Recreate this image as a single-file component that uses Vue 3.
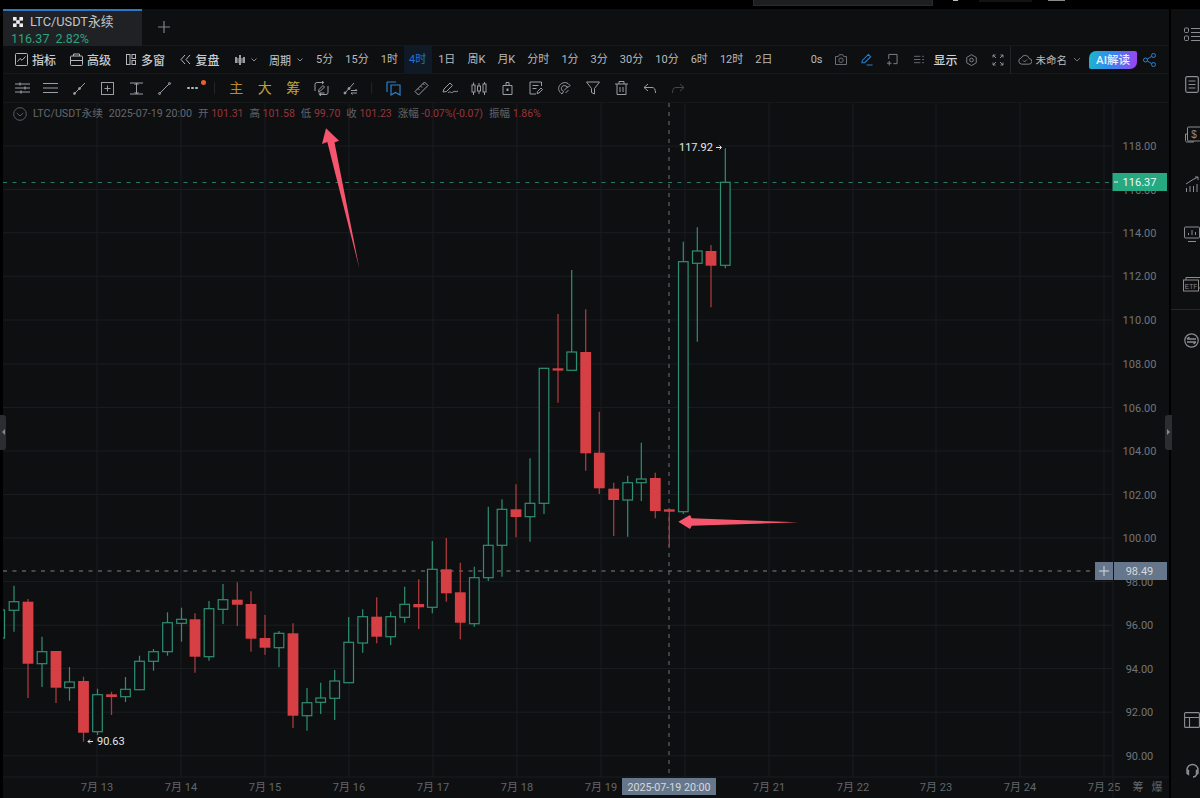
<script setup>
const periodsA = ['5分', '15分', '1时']
const periodsB = ['1日', '周K', '月K', '分时', '1分', '3分', '30分', '10分', '6时', '12时', '2日']
// [x, wickTop, wickBottom, bodyTop, bodyBottom, up]
const candles = [
  [14,585.7,631.7,601.7,610.3,1],[28,599,698,601.7,663.7,0],[42,636.7,687,651.7,663.7,1],[56,651,703,651,687.7,0],
  [69.5,667,700.7,682,687.7,1],[83.5,676.7,741.7,681,732.7,0],[97.5,688.7,735,694.7,731.7,1],[111.5,691.7,715,694.3,697,0],
  [125.5,677,702,689.3,696.7,1],[139.5,655.7,690,661.3,689.7,1],[153.5,649,670.7,651.7,661.3,1],[167.5,612.3,655.7,622.7,651.7,1],
  [181.5,607.7,641.7,619.3,623.3,1],[195,613.3,672.7,619.3,656.7,0],[209,601,660.7,608.7,656.7,1],[223,584,624,599.7,609.3,1],
  [237.3,582.3,626,599.7,604.7,0],[251,591.3,651.7,604,638.7,0],[265,615,654.7,638,647.7,0],[279,631,667.3,633.3,647.7,1],
  [293,623.3,728,633.3,715.7,0],[307,688,730.7,702.7,715.7,1],[320.7,682.7,714,698,702.3,1],[334.7,670,720,681,698.3,1],
  [348.7,617,682.7,642.3,682.7,1],[362.7,609.3,652.7,616.7,643,1],[376.7,597.3,643.3,616.7,636.7,0],[390.7,611.7,645,616.7,636.7,1],
  [404.7,586.7,622.7,604.3,617.3,1],[418.7,579.3,629,604,607.3,0],[432.3,541,613.3,569.3,607.3,1],[446.3,538,601.7,569.3,593.3,0],
  [460.3,562.7,639.3,592.3,622.7,0],[474.3,566.7,626.7,577.7,623.7,1],[488.3,506.7,581,545.3,577.7,1],[502,499.3,576.7,509.3,545.3,1],
  [516,484.3,537.3,509.3,517,0],[530,458.3,541.7,503.3,516.7,1],[544,368.3,514,368.3,503.3,1],[558,314,402.7,368.3,370.6,0],
  [571.7,270,370.3,352,370.3,1],[585.7,309.3,470.7,352,453.3,0],[599.3,411.7,494,452.7,488.3,0],[613.7,482.7,536,488.7,500,0],
  [627.7,475.7,536.7,482.7,500,1],[641.3,442.7,501,479,482.7,1],[655.3,472.7,518.3,478,511,0],[669.3,509,546.7,509.3,511.7,0],
  [683.3,241.7,514,261.7,511.7,1],[697.3,227.3,341.7,251,263.3,1],[711,245,307.3,251,265.7,0],[725.3,148.3,268.3,182.3,265.3,1]
]
const up = candles.filter(c => c[5]).map(c => ({ x: c[0], t: c[1], b: c[2], top: c[3], h: c[4] - c[3] }))
const down = candles.filter(c => !c[5]).map(c => ({ x: c[0], t: c[1], b: c[2], top: c[3], h: c[4] - c[3] }))
const prices = [[118,146],[116,189.5],[114,232.7],[112,276.3],[110,320],[108,364],[106,407.6],[104,451],[102,494.6],[100,538],[98,581.6],[96,625.2],[94,668.6],[92,712.2],[90,755.8]]
const dates = [[97,'7月 13'],[181,'7月 14'],[265,'7月 15'],[349,'7月 16'],[433,'7月 17'],[517,'7月 18'],[601,'7月 19'],[769,'7月 21'],[853,'7月 22'],[936,'7月 23'],[1020,'7月 24'],[1104,'7月 25']]
const vlines = [97,181,265,349,433,517,601,685,769,853,936,1020,1104]
</script>

<template>
  <div class="page">
    <div class="topstrip">
      <span class="ts a"></span><span class="ts b"></span><span class="ts c"></span><span class="ts d"></span>
    </div>
    <div class="body">
      <div class="main">
        <div class="tabs">
          <div class="tab">
            <div class="tabhead">
              <svg width="14" height="14" viewBox="0 0 14 14"><rect x="2" y="2" width="3.6" height="3.6" fill="#eee"/><rect x="8.4" y="2" width="3.6" height="3.6" fill="#eee"/><rect x="5.2" y="5.2" width="3.6" height="3.6" fill="#eee"/><rect x="2" y="8.4" width="3.6" height="3.6" fill="#eee"/><rect x="8.4" y="8.4" width="3.6" height="3.6" fill="#eee"/></svg>
              <span>LTC/USDT永续</span>
            </div>
            <div class="tabprice"><span>116.37</span><span>2.82%</span></div>
          </div>
          <svg class="plus" width="14" height="14" viewBox="0 0 14 14"><path d="M7 1v12M1 7h12" stroke="#7d8187" stroke-width="1.2"/></svg>
        </div>

        <div class="bar1">
          <div class="b1left">
            <span class="tool t1">
              <svg width="13" height="13" viewBox="0 0 13 13" fill="none" stroke="#b4b7bb" stroke-width="1"><rect x=".5" y=".5" width="12" height="12" rx="1"/><path d="M2.500 8.500l2.500-3 2 1.800L10.500 3.500"/></svg>指标
            </span>
            <span class="tool t2">
              <svg width="13" height="13" viewBox="0 0 13 13" fill="none" stroke="#b4b7bb" stroke-width="1"><rect x=".5" y="3" width="12" height="9.500" rx="1"/><path d="M.5 7.500h12M3.500 3V1h6v2"/></svg>高级
            </span>
            <span class="tool t3">
              <svg width="10" height="11" viewBox="0 0 10 11" fill="none" stroke="#b4b7bb" stroke-width="1"><rect x=".5" y=".5" width="3.500" height="10"/><rect x="6" y=".5" width="3.500" height="4"/><rect x="6" y="6.500" width="3.500" height="4"/></svg>多窗
            </span>
            <span class="tool t4">
              <svg width="11" height="11" viewBox="0 0 11 11" fill="none" stroke="#b4b7bb" stroke-width="1"><path d="M5 1L1 5.500 5 10M10 1L6 5.500 10 10"/></svg>复盘
            </span>
            <span class="tool t5">
              <svg width="12" height="13" viewBox="0 0 12 13" fill="#9a9da2"><path d="M1 4h2v6H1zM5 2h2v10H5zM9 4h2v6H9zM3.400 5h1.200v5H3.400zM7.400 5h1.200v5H7.400z"/></svg>
              <svg class="chev" width="6" height="4" viewBox="0 0 6 4" fill="none" stroke="#8a8d92"><path d="M.5.500l2.500 2.500L5.500.500"/></svg>
            </span>
            <span class="tool t6">周期<svg class="chev" width="6" height="4" viewBox="0 0 6 4" fill="none" stroke="#8a8d92"><path d="M.5.500l2.500 2.500L5.500.500"/></svg></span>
            <div class="periods">
              <span v-for="p in periodsA" :key="p" class="per">{{ p }}</span>
              <span class="per active">4时</span>
              <span v-for="p in periodsB" :key="p" class="per">{{ p }}</span>
            </div>
          </div>
          <div class="b1right">
            <span class="zero">0s</span>
            <svg class="r-cam" width="12" height="11" viewBox="0 0 13 12" fill="none" stroke="#74777c"><path d="M.5 2.800h3l1-2h4l1 2h3v8.700H.5z"/><circle cx="6.500" cy="6.800" r="2.400"/></svg>
            <svg class="r-pen" width="12" height="13" viewBox="0 0 13 13" fill="none" stroke="#2f80c9" stroke-width="1.100"><path d="M1 10l.5-2.500L8 1l2.500 2.500L4 10zM6 12.500h6.500"/></svg>
            <svg class="r-add" width="12" height="13" viewBox="0 0 13 13" fill="none" stroke="#84878c"><path d="M3 1h9v10H8M3 1v5M1 10.500h5M3.500 8v5"/></svg>
            <svg class="r-lines" width="10" height="9" viewBox="0 0 11 9" fill="none" stroke="#6d7075"><path d="M0 1h7M0 4.500h7M0 8h7M9 1h2M9 4.500h2M9 8h2"/></svg>
            <span class="show">显示</span>
            <svg class="r-hex" width="11" height="12" viewBox="0 0 12 13" fill="none" stroke="#84878c"><path d="M6 .7l5.200 3v5.900l-5.200 3-5.200-3V3.700z"/><circle cx="6" cy="6.500" r="2"/></svg>
            <svg class="r-full" width="12" height="12" viewBox="0 0 12 12" fill="none" stroke="#8a8d92"><path d="M1 1l3 3M1 1h2.500M1 1v2.500M11 1L8 4M11 1H8.500M11 1v2.500M1 11l3-3M1 11h2.500M1 11V8.500M11 11L8 8M11 11H8.500M11 11V8.500"/></svg>
            <div class="sep"></div>
            <span class="cloud">
              <svg width="14" height="11" viewBox="0 0 15 11" fill="none" stroke="#84878c"><path d="M4 10.500h7.500a3 3 0 0 0 .5-6A4.500 4.500 0 0 0 3.500 3.800 3.400 3.400 0 0 0 4 10.500zM5.500 6.500l1.500 1.500 2.500-2.500"/></svg>
              <span>未命名</span>
              <svg class="chev c2" width="8" height="5" viewBox="0 0 8 5" fill="none" stroke="#6f7277"><path d="M1 1l3 3 3-3"/></svg>
            </span>
            <span class="ai">AI解读</span>
            <svg class="r-share" width="13" height="14" viewBox="0 0 13 14" fill="none" stroke="#2f80c9" stroke-width="1"><circle cx="2.500" cy="7" r="2"/><circle cx="10.500" cy="2.500" r="2"/><circle cx="10.500" cy="11.500" r="2"/><path d="M4.300 6l4.500-2.600M4.300 8l4.500 2.600"/></svg>
          </div>
        </div>

        <div class="bar2">
          <div class="grp">
            <svg width="15" height="12" viewBox="0 0 15 12" fill="none" stroke="#9a9da2"><path d="M0 2h15M0 6h15M0 10h15"/><path d="M5 .5v3M10 4.500v3M6 8.500v3" stroke-width="1.200"/></svg>
            <svg width="15" height="12" viewBox="0 0 15 12" fill="none" stroke="#9a9da2"><path d="M0 1.500h15M0 6h15M0 10.500h15"/></svg>
            <svg width="13" height="13" viewBox="0 0 13 13" fill="none" stroke="#9a9da2"><path d="M1 12L12 1"/><circle cx="1.500" cy="11.500" r="1" fill="#9a9da2"/><circle cx="6.500" cy="6.500" r="1" fill="#9a9da2"/></svg>
            <svg width="13" height="13" viewBox="0 0 13 13" fill="none" stroke="#9a9da2"><rect x=".5" y=".5" width="12" height="12"/><path d="M6.500 3.500v6M3.500 6.500h6"/></svg>
            <svg width="13" height="13" viewBox="0 0 13 13" fill="none" stroke="#9a9da2"><path d="M0 1h13M0 12h13M6.500 1v11M4.500 3l2-2 2 2M4.500 10l2 2 2-2"/></svg>
            <svg width="13" height="13" viewBox="0 0 13 13" fill="none" stroke="#9a9da2"><path d="M1.500 11.500L11.500 1.500"/><circle cx="1.500" cy="11.500" r="1"/><circle cx="11.500" cy="1.500" r="1"/></svg>
            <span class="more"><i></i><i></i><i></i><b></b></span>
          </div>
          <span class="div"></span>
          <div class="grp">
            <span class="gold g1">主</span><span class="gold g2">大</span><span class="gold g3">筹</span>
            <svg width="15" height="15" viewBox="0 0 15 15" fill="none" stroke="#9a9da2"><path d="M9.500 1.500H3a2 2 0 0 0-2 2V10M5.500 13.500H12a2 2 0 0 0 2-2V5M8 0l1.800 1.500L8 3M7 12l-1.800 1.500L7 15M4.500 10.500l.5-2L9 4.500 10.500 6l-4 4zM4.500 12h6"/></svg>
            <svg width="15" height="13" viewBox="0 0 15 13" fill="none" stroke="#9a9da2"><path d="M1 12L11 1"/><circle cx="2" cy="11" r="1" fill="#9a9da2"/><circle cx="6" cy="6.500" r="1" fill="#9a9da2"/><path d="M8 8.500h6l-1.500-1.500M14 11H8l1.500 1.500"/></svg>
          </div>
          <span class="div d2"></span>
          <div class="grp">
            <svg width="15" height="15" viewBox="0 0 15 15" fill="none" stroke="#2f80c9" stroke-width="1.200"><path d="M1 1h9M1 1v10M5 4h9v10l-4.500-2.500L5 14z"/></svg>
            <svg width="15" height="15" viewBox="0 0 15 15" fill="none" stroke="#9a9da2"><path d="M1 10.500L10.500 1 14 4.500 4.500 14zM4 7.500l1.500 1.500M6.500 5L8 6.500M9 2.500l1.500 1.500"/></svg>
            <svg width="17" height="14" viewBox="0 0 17 14" fill="none" stroke="#9a9da2"><path d="M1 11l1-3L8 2l2.500 2.500-6 6zM6 12c2-3 3 1 5-1s2 1 5-1"/></svg>
            <svg width="16" height="15" viewBox="0 0 16 15" fill="none" stroke="#9a9da2"><rect x="1" y="4" width="3" height="7"/><rect x="6.500" y="5" width="3" height="5"/><rect x="12" y="3" width="3" height="8"/><path d="M2.500 1.500v2.500M2.500 11v3M8 2v3M8 10v3M13.500 1v2M13.500 11v3"/></svg>
            <svg width="11" height="13" viewBox="0 0 11 13" fill="none" stroke="#9a9da2"><path d="M1 3.500h9V12.500H1zM4 3.500v-3h3v3"/><rect x="4.500" y="6.500" width="2" height="2.500" fill="#9a9da2" stroke="none"/></svg>
            <svg width="14" height="14" viewBox="0 0 14 14" fill="none" stroke="#9a9da2"><path d="M12.500 5V1H1v12h6M3.500 4.500h6M3.500 7.500h4M8 12.500l.5-2L12 7l1.500 1.500-3.500 3.500z"/></svg>
            <svg width="14" height="14" viewBox="0 0 14 14" fill="none" stroke="#9a9da2"><path d="M5 13C2 11 1 8 2 5.500 3.500 2 8 .5 11 2.500l2 2-2 2-2-1.500C7 4 5 5 4.500 6.500 4 8 5 10 6.500 10.500L5 13zM8.500 12l3-3M7 9.500l4-4"/></svg>
            <svg width="14" height="14" viewBox="0 0 14 14" fill="none" stroke="#9a9da2"><path d="M.5 1h13L8.500 7.500V13l-3-1.500V7.500z"/></svg>
            <svg width="13" height="14" viewBox="0 0 13 14" fill="none" stroke="#9a9da2"><path d="M0 3h13M2 3v10.500h9V3M4 3V.5h5V3M5 6v5M8 6v5"/></svg>
            <svg width="13" height="11" viewBox="0 0 13 11" fill="none" stroke="#9a9da2"><path d="M5 1L1 4.500 5 8M1 4.500h8c2.500 0 3.500 2 3.500 5.500"/></svg>
            <svg width="13" height="11" viewBox="0 0 13 11" fill="none" stroke="#45474b"><path d="M8 1l4 3.500L8 8M12 4.500H4C1.500 4.500.5 6.500.5 10"/></svg>
          </div>
        </div>

        <div class="chart">
          <svg class="canvas" width="1166" height="695" viewBox="3 103 1166 695">
            <g stroke="#1b1d20" stroke-width="1">
              <line v-for="p in prices" :key="p[0]" x1="3" :y1="p[1]" x2="1113" :y2="p[1]"/>
              <line v-for="v in vlines" :key="v" :x1="v" y1="103" :x2="v" y2="777"/>
              <line x1="1113" y1="103" x2="1113" y2="798"/>
              <line x1="3" y1="777" x2="1169" y2="777"/>
            </g>
            <line x1="3" y1="182.500" x2="1112" y2="182.500" stroke="#2a7a63" stroke-dasharray="4 5.500"/>
            <line x1="3" y1="571" x2="1095" y2="571" stroke="#7e8388" stroke-dasharray="4 5.500"/>
            <line x1="669" y1="103" x2="669" y2="777" stroke="#6f7276" stroke-dasharray="4 5"/>

            <g stroke="#2f8f72" stroke-width="1.200" fill="#0e0f11">
              <rect x="-11" y="610" width="15.500" height="28" fill="none"/>
              <g v-for="c in up" :key="c.x">
                <line :x1="c.x" :y1="c.t" :x2="c.x" :y2="c.b"/>
                <rect :x="c.x - 4.800" :y="c.top" width="9.600" :height="c.h"/>
              </g>
            </g>
            <g>
              <g v-for="c in down" :key="c.x">
                <line :x1="c.x" :y1="c.t" :x2="c.x" :y2="c.b" stroke="#a9393e" stroke-width="1.300"/>
                <rect :x="c.x - 5.400" :y="c.top" width="10.800" :height="c.h" fill="#d64045"/>
              </g>
            </g>

            <g class="axis">
              <text v-for="p in prices" :key="p[0]" x="1139.500" :y="p[1] + 4" text-anchor="middle">{{ p[0].toFixed(2) }}</text>
            </g>
            <g class="dates">
              <text v-for="d in dates" :key="d[0]" :x="d[0]" y="791" text-anchor="middle">{{ d[1] }}</text>
              <text x="1138" y="791" text-anchor="middle">筹</text>
              <text x="1157" y="791" text-anchor="middle">爆</text>
            </g>

            <rect x="1112.500" y="173" width="54.500" height="18" fill="#26a881"/>
            <line x1="1114" y1="182" x2="1118" y2="182" stroke="#e6f5ef"/>
            <text class="tag" x="1139.500" y="186" text-anchor="middle">116.37</text>
            <rect x="1095" y="562" width="18" height="18" fill="#67778b"/>
            <path d="M1104 566v10M1099 571h10" stroke="#d7dbe0"/>
            <rect x="1114" y="562" width="53" height="18" fill="#67778b"/>
            <text class="tag t2" x="1139.500" y="575" text-anchor="middle">98.49</text>
            <rect x="622" y="778" width="94" height="17" fill="#67778b"/>
            <text class="tag t3" x="669" y="791" text-anchor="middle">2025-07-19 20:00</text>

            <text class="mark" x="679" y="150.500">117.92</text>
            <path d="M716 147.500h5M719.500 145.500l2 2-2 2" stroke="#e5e6e8" fill="none"/>
            <path d="M93 741.500h-5M90 739.500l-2 2 2 2" stroke="#e5e6e8" fill="none"/>
            <text class="mark" x="97" y="745">90.63</text>

            <path d="M359.300 268.300 L327.300 142 L322 144 L326 128.300 L339 140.700 L334.500 142.500 Z" fill="#f5566e"/>
            <path d="M798.300 522.300 L691.700 518.300 L690 515 L678.300 521.700 L690 529 L691.700 525.700 Z" fill="#f5566e"/>
          </svg>

          <div class="legend">
            <svg width="14" height="14" viewBox="0 0 14 14" fill="none" stroke="#5a5d62"><circle cx="7" cy="7" r="6.300"/><path d="M3.800 6l3.200 3 3.200-3"/></svg>
            <span class="lg-name">LTC/USDT永续</span>
            <span class="lg-name">2025-07-19 20:00</span>
            <span class="pair">开 <b>101.31</b></span>
            <span class="pair">高 <b>101.58</b></span>
            <span class="pair">低 <b>99.70</b></span>
            <span class="pair">收 <b>101.23</b></span>
            <span class="pair">涨幅 <b>-0.07%(-0.07)</b></span>
            <span class="pair">振幅 <b>1.86%</b></span>
          </div>

          <span class="handle left"><i></i></span>
          <span class="handle right"><i></i></span>
        </div>
      </div>

      <aside class="side">
        <div class="siderows">
          <svg width="17" height="15" viewBox="0 0 17 15" fill="none" stroke="#8a8d92"><rect x=".5" y="1" width="4" height="4.500" rx="1"/><rect x=".5" y="9" width="4" height="4.500" rx="1"/><path d="M7 1.500h10M7 5.500h10M7 9.500h10M7 13.500h10"/></svg>
          <svg width="14" height="17" viewBox="0 0 14 17" fill="none" stroke="#8a8d92" stroke-width="1.200"><rect x=".7" y=".7" width="12.600" height="15.600" rx="1.500"/><path d="M3.500 5h7M3.500 8.500h7M3.500 12h7"/></svg>
          <svg width="17" height="17" viewBox="0 0 17 17" fill="none" stroke="#8a8d92"><rect x="3.500" y="1" width="13" height="14" rx="1"/><path d="M3.500 8H1.500v6.500c0 1 .7 1.500 1.500 1.500h7"/><text x="10" y="12" font-size="10" fill="#8a8d92" stroke="none" text-anchor="middle" font-family="Liberation Sans">$</text></svg>
          <svg width="15" height="17" viewBox="0 0 15 17" fill="none" stroke="#8a8d92"><path d="M1 8L8 3.500 13 1M13 1h-3M13 1v3M1.500 16v-4M5 16v-6M8.500 16v-6M12 16V8"/></svg>
          <svg width="16" height="17" viewBox="0 0 16 17" fill="none" stroke="#8a8d92"><rect x=".5" y="1" width="15" height="11" rx="1"/><path d="M4 15.500h8M4.500 9V7M8 9V4M11.500 9V6"/></svg>
          <svg width="18" height="15" viewBox="0 0 18 15" fill="none" stroke="#8a8d92"><rect x=".5" y="3" width="15" height="11"/><path d="M3 3V.5h15V11h-2.500"/><text x="8" y="11.500" font-size="6.500" fill="#8a8d92" stroke="none" text-anchor="middle" font-family="Liberation Sans">ETF</text></svg>
        </div>
        <div class="sideline"></div>
        <svg class="swap" width="15" height="15" viewBox="0 0 15 15" fill="none" stroke="#8a8d92" stroke-width="1.200"><circle cx="7.500" cy="7.500" r="6.700"/><path d="M3 6h9M12 9H3M3 6l2.500-2M12 9l-2.500 2" stroke-width="1.300"/></svg>
        <div class="siderows bottom">
          <svg width="16" height="16" viewBox="0 0 16 16" fill="none" stroke="#8a8d92" stroke-width="1.100"><rect x=".6" y=".6" width="14.800" height="14.800" rx="1"/><path d="M.6 5.500h14.800M5.500 5.500v10"/></svg>
          <svg width="15" height="15" viewBox="0 0 15 15" fill="none" stroke="#8a8d92" stroke-width="1.400"><path d="M2 9.500V7a5.500 5.500 0 0 1 11 0v2.500M2 7.500v3l1.500 1V7.500zM13 7.500v3l-1.500 1V7.500zM11.500 11.500c-.5 1.500-2 2.500-3.500 2.500"/></svg>
        </div>
      </aside>
    </div>
  </div>
</template>

<style scoped>
.page {
  width: 1200px;
  height: 798px;
  background: #000;
  display: flex;
  flex-direction: column;
  overflow: hidden;
  font-family: "Roboto", "Noto Sans CJK SC", "Liberation Sans", sans-serif;
  color: #b4b7bb;
}
.topstrip {
  height: 9px;
  position: relative;
  flex: none;
}
.ts {
  position: absolute;
  top: 0;
  background: #1d1e20;
  height: 5px;
}
.ts.a { left: 753px; width: 178px; border: 1px solid #2a2b2e; border-top: 0; }
.ts.b { left: 953px; width: 5px; height: 1px; background: #bcbcbc; }
.ts.c { left: 979px; width: 53px; height: 2px; background: #131314; }
.ts.d { left: 1048px; width: 17px; height: 1px; background: #8a8a8a; }
.body {
  flex: 1;
  display: flex;
  min-height: 0;
  padding-left: 3px;
}
.main {
  width: 1166px;
  flex: none;
  display: flex;
  flex-direction: column;
  background: #0e0f11;
}
.tabs {
  height: 37px;
  flex: none;
  display: flex;
  align-items: center;
  border-bottom: 1px solid #17181a;
  box-sizing: border-box;
}
.tab {
  width: 139px;
  height: 37px;
  box-sizing: border-box;
  background: #202125;
  border-top: 2px solid #2a78c8;
  padding: 2px 0 0 8px;
  align-self: flex-start;
}
.tabhead {
  display: flex;
  align-items: center;
  gap: 5px;
  font-size: 12.800px;
  line-height: 18px;
  color: #c3c5c9;
}
.tabprice {
  display: flex;
  gap: 6px;
  font-size: 12.500px;
  line-height: 15px;
  color: #2ba47f;
}
.plus {
  margin-left: 15px;
}
.bar1 {
  height: 28px;
  flex: none;
  display: flex;
  align-items: center;
  justify-content: space-between;
  box-sizing: border-box;
  border-bottom: 1px solid #17181a;
  padding-left: 12px;
}
.b1left, .b1right, .periods {
  display: flex;
  align-items: center;
  height: 100%;
}
.tool {
  display: inline-flex;
  align-items: center;
  gap: 4px;
  color: #c8cacd;
  font-size: 12px;
  font-weight: 500;
}
.t2 { margin-left: 14px; }
.t3 { margin-left: 15px; gap: 5px; }
.t4 { margin-left: 15px; gap: 4.500px; }
.t5 { margin-left: 14px; gap: 5.500px; }
.t6 { margin-left: 12px; gap: 5.500px; font-size: 11px; font-weight: 400; }
.chev { flex: none; }
.periods {
  gap: 12.050px;
  margin-left: 13.500px;
}
.per {
  font-size: 11px;
  color: #b9bbbf;
  line-height: 27px;
  white-space: nowrap;
}
.per.active {
  background: #101a26;
  color: #1f74d8;
  padding: 0 6px 0 5px;
  margin: 0 -6px 0 -6px;
}
.b1right {
  padding-right: 13px;
}
.b1right > svg { flex: none; }
.zero { font-size: 11px; color: #b9bbbf; }
.r-cam { margin-left: 13px; }
.r-pen { margin-left: 14px; }
.r-add { margin-left: 13px; }
.r-lines { margin-left: 16px; }
.show { font-size: 12px; font-weight: 500; color: #d0d2d5; margin-left: 9px; }
.r-hex { margin-left: 8px; }
.r-full { margin-left: 15px; }
.sep {
  width: 1px;
  height: 28px;
  background: #222326;
  margin-left: 6px;
}
.cloud {
  display: inline-flex;
  align-items: center;
  gap: 4px;
  margin-left: 7px;
  font-size: 10.500px;
  color: #b9bbbf;
}
.c2 { margin-left: 2px; }
.ai {
  margin-left: 8px;
  width: 48px;
  height: 18px;
  line-height: 18px;
  text-align: center;
  font-size: 11.500px;
  font-weight: 500;
  color: #e8f0fb;
  border-radius: 7px 2px 7px 2px;
  background: linear-gradient(100deg, #1fb6c9 0%, #2f8bf0 45%, #a23ff0 100%);
}
.r-share { margin-left: 6px; }
.bar2 {
  height: 29px;
  flex: none;
  box-sizing: border-box;
  border-bottom: 1px solid #17181a;
  display: flex;
  align-items: center;
  padding-left: 5px;
}
.grp {
  display: grid;
  grid-auto-flow: column;
  grid-auto-columns: 28.500px;
  justify-items: center;
  align-items: center;
}
.more {
  position: relative;
  display: inline-flex;
  gap: 1.500px;
  width: 12px;
}
.more i {
  width: 2.500px;
  height: 2.500px;
  background: #b4b7bb;
  border-radius: 50%;
}
.more b {
  position: absolute;
  top: -7px;
  right: -7px;
  width: 5px;
  height: 5px;
  border-radius: 50%;
  background: #e8602c;
}
.div {
  width: 1px;
  height: 12px;
  background: #232427;
  margin: 0 7.500px 0 6px;
}
.gold {
  font-size: 14px;
  line-height: 16px;
  text-align: center;
}
.g1 { color: #b88a2c; }
.g2 { color: #b8a235; }
.g3 { color: #c4a83c; }
.chart {
  flex: 1;
  position: relative;
  min-height: 0;
}
.canvas {
  position: absolute;
  inset: 0;
  display: block;
}
.axis text {
  font-size: 11px;
  fill: #72757a;
}
.dates text {
  font-size: 11px;
  fill: #63666b;
}
.tag {
  font-size: 11px;
  fill: #f2f7f5;
}
.tag.t2 { fill: #d5d9de; }
.tag.t3 { font-size: 10.700px; fill: #d5d9de; }
.mark {
  font-size: 11px;
  fill: #e5e6e8;
}
.legend {
  position: absolute;
  left: 10px;
  top: 4px;
  display: flex;
  align-items: center;
  gap: 6px;
  font-size: 10.500px;
  line-height: 14px;
  color: #62656a;
  white-space: nowrap;
}
.lg-name { color: #65686d; font-size: 10.700px; }
.pair b {
  font-weight: 400;
  color: #97353a;
}
.handle {
  position: absolute;
  top: 312px;
  height: 35px;
  background: #2b2d30;
  z-index: 2;
}
.handle i {
  position: absolute;
  top: 14px;
  border: 3px solid transparent;
}
.handle.left { left: -3px; width: 6px; border-radius: 0 3px 3px 0; }
.handle.left i { border-right-color: #85888d; left: -1px; }
.handle.right { right: -3px; width: 7px; border-radius: 3px 0 0 3px; }
.handle.right i { border-left-color: #85888d; left: 2px; }
.side {
  flex: 1;
  margin-left: 2px;
  background: #0e0f11;
  display: flex;
  flex-direction: column;
  align-items: flex-start;
  overflow: hidden;
}
.siderows {
  display: grid;
  grid-auto-rows: 50px;
  justify-items: center;
  align-items: center;
  width: 18px;
  margin-left: 12px;
}
.sideline {
  width: 100%;
  height: 1px;
  background: #26272a;
  flex: none;
}
.swap { margin: 23px 0 0 13px; flex: none; }
.siderows.bottom {
  margin-top: auto;
  padding-bottom: 3px;
}
</style>

<style>
html, body { background: #000; }
</style>
